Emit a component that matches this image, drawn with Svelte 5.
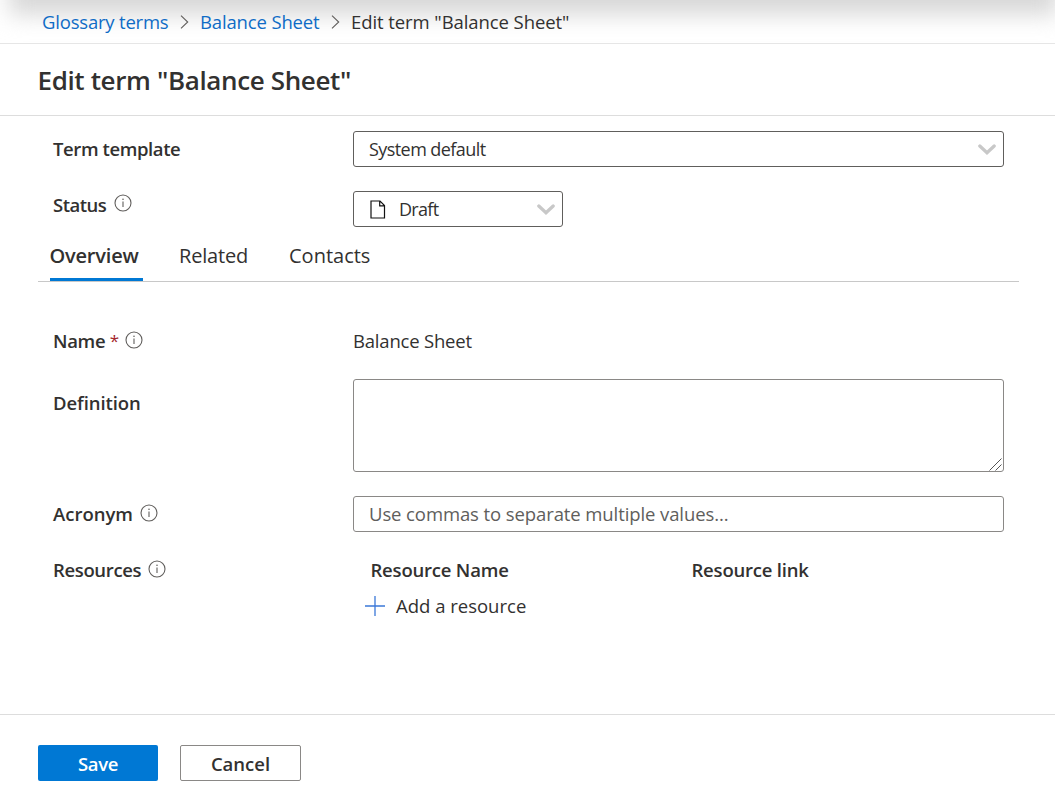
<script>
  let definition = $state('');
  let acronym = $state('');
  let active = $state('Overview');
  const tabs = ['Overview', 'Related', 'Contacts'];
</script>

{#snippet info()}
  <svg class="info" width="18" height="18" viewBox="0 0 18 18" aria-hidden="true">
    <circle cx="9" cy="9" r="8" fill="none" stroke="#605e5c" stroke-width="1.1" />
    <path d="M9 7.4V13" stroke="#605e5c" stroke-width="1.1" />
    <circle cx="9" cy="5.3" r=".8" fill="#605e5c" />
  </svg>
{/snippet}

{#snippet crumb()}
  <svg class="sep" width="9" height="14" viewBox="0 0 9 14" aria-hidden="true">
    <path d="M1 .6 7.7 7 1 13.4" fill="none" stroke="#605e5c" stroke-width="1.1" />
  </svg>
{/snippet}

{#snippet down()}
  <svg class="down" width="18" height="11" viewBox="0 0 18 11" aria-hidden="true">
    <path d="M1.8 2 9 8.7 16.2 2" fill="none" stroke="#c8c8c8" stroke-width="3.3" stroke-linecap="round" />
  </svg>
{/snippet}

<div class="page">
  <nav>
    <a class="c1" href="#terms">Glossary terms</a>
    {@render crumb()}
    <a class="c2" href="#sheet">Balance Sheet</a>
    {@render crumb()}
    <span class="c3">Edit term "Balance Sheet"</span>
  </nav>
  <header><h1>Edit term "Balance Sheet"</h1></header>

  <main>
    <div class="row template">
      <span class="label l-template">Term template</span>
      <div class="select wide"><span class="system">System default</span>{@render down()}</div>
    </div>
    <div class="row status">
      <span class="label l-status"><b>Status</b>{@render info()}</span>
      <div class="select small">
        <svg class="doc" width="16" height="19" viewBox="0 0 16 19" aria-hidden="true">
          <path d="M1 1H10L14.5 5.5V18H1Z M9.7 1V5.8H14.5" fill="none" stroke="#111" stroke-width="1.2" />
        </svg>
        <span class="draft">Draft</span>{@render down()}
      </div>
    </div>

    <div class="tabs">
      {#each tabs as tab}
        <button class={['tab', tab.toLowerCase(), { active: active === tab }]} onclick={() => (active = tab)}>{tab}</button>
      {/each}
    </div>

    <div class="row name">
      <span class="label l-name"><b>Name</b><i>*</i>{@render info()}</span>
      <span class="value">Balance Sheet</span>
    </div>
    <div class="row definition">
      <span class="label">Definition</span>
      <div class="area">
        <textarea bind:value={definition} aria-label="Definition"></textarea>
        <svg class="grip" width="13" height="13" viewBox="0 0 13 13" aria-hidden="true">
          <path d="M.5 12.5 12.5.5M6.5 12.5 12.5 6.5" stroke="#555" stroke-width="1" />
        </svg>
      </div>
    </div>
    <div class="row acronym">
      <span class="label"><b>Acronym</b>{@render info()}</span>
      <input bind:value={acronym} placeholder="Use commas to separate multiple values..." />
    </div>
    <div class="row resources">
      <span class="label l-res"><b>Resources</b>{@render info()}</span>
      <div class="grid">
        <span class="th">Resource Name</span>
        <span class="th">Resource link</span>
        <button class="add">
          <svg width="20" height="20" viewBox="0 0 20 20" aria-hidden="true">
            <path d="M0 10H20M10 0V20" stroke="#3b78d8" stroke-width="1.3" />
          </svg>
          Add a resource
        </button>
      </div>
    </div>
  </main>

  <footer>
    <button class="save">Save</button>
    <button class="cancel">Cancel</button>
  </footer>
</div>

<style>
  :global(body) { margin: 0; background: #fff; }
  .page, .page * { box-sizing: border-box; }
  .page {
    display: flex; flex-direction: column; width: 1055px; height: 809px; overflow: hidden;
    font: 400 18.5px/36px "Open Sans", "Noto Sans", sans-serif; color: #323130; white-space: nowrap;
  }
  svg { display: block; flex: none; }
  button, input, textarea { font: inherit; color: inherit; letter-spacing: inherit; margin: 0; padding: 0; border: 0; background: none; outline: 0; }
  nav { position: relative; z-index: 0; overflow: hidden; display: flex; align-items: center; height: 44px; padding-left: 42px; border-bottom: 1px solid #e6e6e6; }
  /* soft shadow cast by the bar above */
  nav::before { content: ""; position: absolute; z-index: -1; left: 9px; right: -3px; top: -60px; height: 75px; background: #d8d8d8; filter: blur(11px); }
  nav a { color: #0f6cc6; text-decoration: none; }
  .c1 { width: 138px; letter-spacing: -.2px; }
  .c2 { width: 131px; margin-left: 11px; letter-spacing: -.15px; }
  .c3 { margin-left: 11px; letter-spacing: -.08px; }
  header { height: 72px; border-bottom: 1px solid #ddd; padding-left: 37.5px; }
  h1 { margin: 0; font-size: 26px; line-height: 73px; font-weight: 600; letter-spacing: -.36px; }
  main { flex: 1; padding: 15px 36px 0 38px; display: flex; flex-direction: column; }
  .row { display: grid; grid-template-columns: 300px 651px; padding-left: 15px; align-items: start; }
  .label { display: flex; align-items: center; height: 36px; font-weight: 600; }
  .label b { font-weight: 600; }
  .label i { color: #a4262c; font-style: normal; font-weight: 400; font-size: 17px; margin-left: 4.5px; }
  .info { margin: 0 0 3px 6.5px; }
  .l-template { letter-spacing: -.4px; }
  .l-status { letter-spacing: -.5px; height: 28px; }
  .l-status .info { margin: 0 0 4px 7.7px; }
  .l-name { letter-spacing: -.3px; }
  .l-res { letter-spacing: -.35px; }
  .l-res .info { margin-left: 7px; }
  .select { display: flex; align-items: center; height: 36px; border: 1px solid #605e5c; border-radius: 3px; padding: 0 7px 0 15px; }
  .small { width: 210px; }
  .down { margin-left: auto; }
  .system { font-size: 18px; letter-spacing: -.57px; }
  .doc { margin-left: 1px; }
  .draft { font-size: 18px; letter-spacing: -.7px; margin-left: 13px; }
  .status { margin-top: 24px; }
  .tabs { display: flex; height: 54px; width: 981px; margin-top: 1px; border-bottom: 1px solid #c8c8c8; padding-left: 12px; font-size: 20px; }
  .tab { height: 53px; line-height: 54px; padding-top: 1px; text-align: left; border-bottom: 3px solid transparent; }
  .tab.active { font-weight: 600; border-color: #0078d4; }
  .overview { width: 93px; margin-right: 36px; letter-spacing: -.2px; text-indent: -.5px; }
  .related { width: 68px; margin-right: 42px; letter-spacing: -.17px; }
  .name { margin-top: 41px; }
  .value { letter-spacing: -.2px; }
  .definition { margin-top: 20px; }
  .definition .label { margin-top: 6px; letter-spacing: -.08px; }
  .area { position: relative; height: 93px; }
  textarea { display: block; width: 100%; height: 93px; border: 1px solid #8a8886; border-radius: 3px; resize: none; padding: 4px 15px; }
  .grip { position: absolute; right: 2px; bottom: 1px; }
  .acronym { margin-top: 24px; }
  input { height: 36px; width: 100%; border: 1px solid #8a8886; border-radius: 3px; padding: 0 15px; letter-spacing: -.1px; }
  input::placeholder { color: #605e5c; opacity: 1; }
  .resources { margin-top: 20px; }
  .grid { display: grid; grid-template-columns: 321px 1fr; padding-left: 17.5px; }
  .th { font-weight: 600; letter-spacing: -.2px; }
  .add { display: flex; align-items: center; gap: 11px; margin-left: -5.5px; height: 36px; }
  footer { height: 95px; border-top: 1px solid #ddd; padding: 30px 38px 0; display: flex; gap: 22px; }
  footer button { height: 36px; line-height: 34px; padding-top: 1px; border-radius: 2px; font-weight: 600; }
  .save { width: 120px; background: #0078d4; color: #fff; letter-spacing: -.3px; }
  .cancel { width: 121px; border: 1px solid #8a8886; }
</style>
